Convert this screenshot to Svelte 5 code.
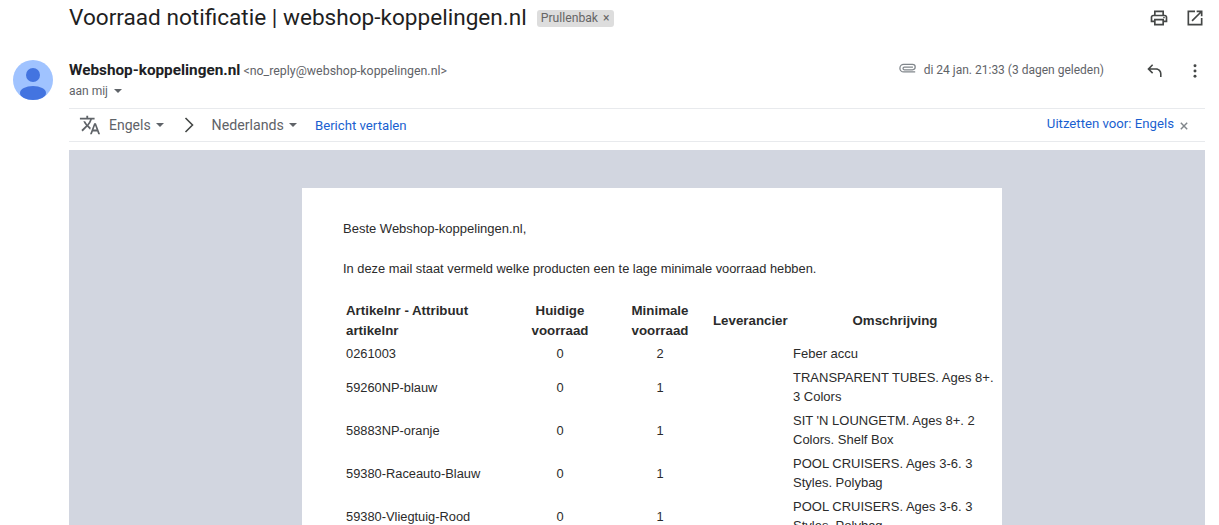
<script>
  const rows = [
    ['0261003', '0', '2', 'Feber accu'],
    ['59260NP-blauw', '0', '1', 'TRANSPARENT TUBES. Ages 8+. 3 Colors'],
    ['58883NP-oranje', '0', '1', "SIT 'N LOUNGETM. Ages 8+. 2 Colors. Shelf Box"],
    ['59380-Raceauto-Blauw', '0', '1', 'POOL CRUISERS. Ages 3-6. 3 Styles. Polybag'],
    ['59380-Vliegtuig-Rood', '0', '1', 'POOL CRUISERS. Ages 3-6. 3 Styles. Polybag']
  ];
</script>

<div class="page">
  <header class="subject">
    <h1>Voorraad notificatie | webshop-koppelingen.nl</h1>
    <span class="label">Prullenbak <span class="label-x">×</span></span>
    <div class="top-icons">
      <svg viewBox="0 0 24 24" width="20" height="20" fill="#444746"><path d="M19 8h-1V3H6v5H5c-1.66 0-3 1.34-3 3v6h4v4h12v-4h4v-6c0-1.66-1.34-3-3-3zM8 5h8v3H8V5zm8 14H8v-4h8v4zm4-4h-2v-2H6v2H4v-4c0-.55.45-1 1-1h14c.55 0 1 .45 1 1v4z"/><circle cx="18" cy="11.5" r="1"/></svg>
      <svg viewBox="0 0 24 24" width="20" height="20" fill="#444746"><path d="M19 19H5V5h7V3H3v18h18v-9h-2v7zM14 3v2h3.59l-9.83 9.83 1.41 1.41L19 6.41V10h2V3h-7z"/></svg>
    </div>
  </header>

  <div class="message">
    <div class="avatar">
      <svg viewBox="0 0 40 40" width="40" height="40">
        <circle cx="20" cy="20" r="20" fill="#a0c3ff"/>
        <circle cx="20" cy="15" r="7" fill="#4374e0"/>
        <ellipse cx="20" cy="33" rx="13" ry="7" fill="#4374e0"/>
      </svg>
    </div>
    <div class="content">
      <div class="meta">
        <div class="who">
          <div class="from"><b>Webshop-koppelingen.nl</b> <span>&lt;no_reply@webshop-koppelingen.nl&gt;</span></div>
          <div class="to">aan mij <i class="caret"></i></div>
        </div>
        <div class="when">
          <svg class="clip" viewBox="0 0 20 12" width="18" height="11" fill="none" stroke="#80868b" stroke-width="1.4"><path d="M18 9.8H5.2a4.2 4.2 0 0 1 0-8.4H15a3 3 0 0 1 0 6H6a1.4 1.4 0 0 1 0-3h9.5"/></svg>
          <span class="date">di 24 jan. 21:33 (3 dagen geleden)</span>
          <svg class="reply" viewBox="0 0 24 24" width="20" height="20" fill="#444746"><path d="M20 19v-4c0-2.8-2.2-5-5-5H7.8l3.6 3.6L10 15l-6-6 6-6 1.4 1.4L7.8 8H15c3.9 0 7 3.1 7 7v4z" transform="translate(-1 1) scale(.95)"/></svg>
          <svg class="more" viewBox="0 0 4 16" width="4" height="14" fill="#444746"><circle cx="2" cy="2" r="1.7"/><circle cx="2" cy="8" r="1.7"/><circle cx="2" cy="14" r="1.7"/></svg>
        </div>
      </div>

      <div class="translate">
        <svg class="tr-icon" viewBox="0 0 24 24" width="22" height="22" fill="#5f6368"><path d="M12.87 15.07l-2.54-2.51.03-.03A17.52 17.52 0 0 0 14.07 6H17V4h-7V2H8v2H1v2h11.17C11.5 7.92 10.44 9.75 9 11.35 8.07 10.32 7.3 9.19 6.69 8h-2c.73 1.63 1.73 3.17 2.98 4.56l-5.09 5.02L4 19l5-5 3.11 3.11.76-2.04zM18.5 10h-2L12 22h2l1.12-3h4.75L21 22h2l-4.5-12zm-2.62 7l1.62-4.33L19.12 17h-3.24z"/></svg>
        <span class="lang">Engels</span><i class="caret dark"></i>
        <svg class="chev" viewBox="0 0 10 16" width="10" height="16" fill="none" stroke="#444746" stroke-width="1.6"><path d="M1.5 1l7 7-7 7"/></svg>
        <span class="lang nl">Nederlands</span><i class="caret dark"></i>
        <span class="link first">Bericht vertalen</span>
        <span class="link off">Uitzetten voor: Engels</span>
        <svg class="close" viewBox="0 0 10 10" width="8" height="8" stroke="#80868b" stroke-width="1.8"><path d="M1 1l8 8M9 1l-8 8"/></svg>
      </div>

      <div class="mail-bg">
        <div class="mail">
          <p class="greet">Beste Webshop-koppelingen.nl,</p>
          <p class="intro">In deze mail staat vermeld welke producten een te lage minimale voorraad hebben.</p>
          <table>
            <colgroup><col class="c1" /><col class="c2" /><col class="c3" /><col class="c4" /><col class="c5" /></colgroup>
            <thead>
              <tr>
                <th class="left">Artikelnr - Attribuut artikelnr</th>
                <th>Huidige voorraad</th>
                <th>Minimale voorraad</th>
                <th>Leverancier</th>
                <th>Omschrijving</th>
              </tr>
            </thead>
            <tbody>
              {#each rows as r}
                <tr>
                  <td>{r[0]}</td>
                  <td class="num">{r[1]}</td>
                  <td class="num">{r[2]}</td>
                  <td></td>
                  <td class="desc">{r[3]}</td>
                </tr>
              {/each}
            </tbody>
          </table>
        </div>
      </div>
    </div>
  </div>
</div>

<style>
  :global(body) { margin: 0; background: #fff; overflow: hidden; }
  .page { width: 1219px; height: 525px; overflow: hidden; font-family: Roboto, "Liberation Sans", sans-serif; color: #202124; }
  .subject { display: flex; align-items: center; height: 36px; margin-left: 69px; width: 1136px; }
  h1 { margin: 0; font-size: 22.6px; font-weight: 400; line-height: 36px; color: #1f1f1f; white-space: nowrap; }
  .label { margin-left: 10px; margin-top: 1px; background: #ddd; border-radius: 3px; padding: 0 4px 0 4px; height: 17px; font-size: 12.2px; line-height: 17px; color: #666; white-space: nowrap; }
  .label-x { color: #666; margin-left: 2px; }
  .top-icons { margin-left: auto; display: flex; gap: 16px; margin-top: -1px; }
  .message { display: flex; padding-top: 24px; }
  .avatar { width: 40px; height: 40px; margin-left: 13px; margin-right: 16px; flex: none; }
  .avatar svg { display: block; }
  .content { width: 1136px; flex: none; }
  .meta { display: flex; justify-content: space-between; height: 48px; border-bottom: 1px solid #e8eaed; }
  .from { font-size: 12.4px; line-height: 20px; color: #5f6368; white-space: nowrap; }
  .from b { font-size: 15.3px; font-weight: 700; color: #202124; }
  .to { font-size: 12px; line-height: 20px; color: #5f6368; display: flex; align-items: center; }
  .when { display: flex; align-items: flex-start; padding-top: 1px; }
  .clip { margin-top: 2px; margin-right: 7px; }
  .date { font-size: 12px; line-height: 18px; color: #5f6368; }
  .reply { margin-left: 41px; }
  .more { margin-left: 28px; margin-right: 8px; margin-top: 3px; }
  .caret { display: inline-block; width: 0; height: 0; border-left: 4px solid transparent; border-right: 4px solid transparent; border-top: 4px solid #5f6368; margin-left: 6px; }
  .caret.dark { margin-left: 5px; }
  .translate { display: flex; align-items: center; height: 32px; border-bottom: 1px solid #e8eaed; padding-left: 10px; }
  .tr-icon { margin-right: 8px; }
  .lang { font-size: 14px; color: #5f6368; }
  .nl { font-size: 14.2px; margin-left: 1px; }
  .chev { margin-left: 20px; margin-right: 17px; }
  .link { font-size: 13.2px; color: #1a5fd0; }
  .first { margin-left: 18px; }
  .off { margin-left: auto; margin-top: -3px; }
  .close { margin-left: 6px; margin-right: 17px; margin-top: 1px; }
  .mail-bg { margin-top: 8px; background: #d2d6e0; padding: 38px 203px 0 233px; height: 400px; }
  .mail { background: #fff; width: 700px; height: 400px; box-sizing: border-box; padding: 33px 0 0 41px; font-family: "Liberation Sans", Arial, sans-serif; font-size: 12.85px; color: #2b2b2b; }
  p { margin: 0; line-height: 16px; }
  .greet { margin-bottom: 24px; font-size: 13px; }
  .intro { margin-bottom: 23px; }
  table { border-collapse: collapse; table-layout: fixed; width: 657px; line-height: 19px; }
  .c1 { width: 167px; } .c2 { width: 100px; } .c3 { width: 100px; } .c4 { width: 80px; } .c5 { width: 210px; }
  th { font-weight: 700; font-size: 13.3px; line-height: 20px; padding: 1px 3px 1px; text-align: center; }
  th.left { text-align: left; }
  td { padding: 2px 3px 3px; vertical-align: middle; }
  .desc { font-size: 13px; }
  .num { text-align: center; }
</style>
